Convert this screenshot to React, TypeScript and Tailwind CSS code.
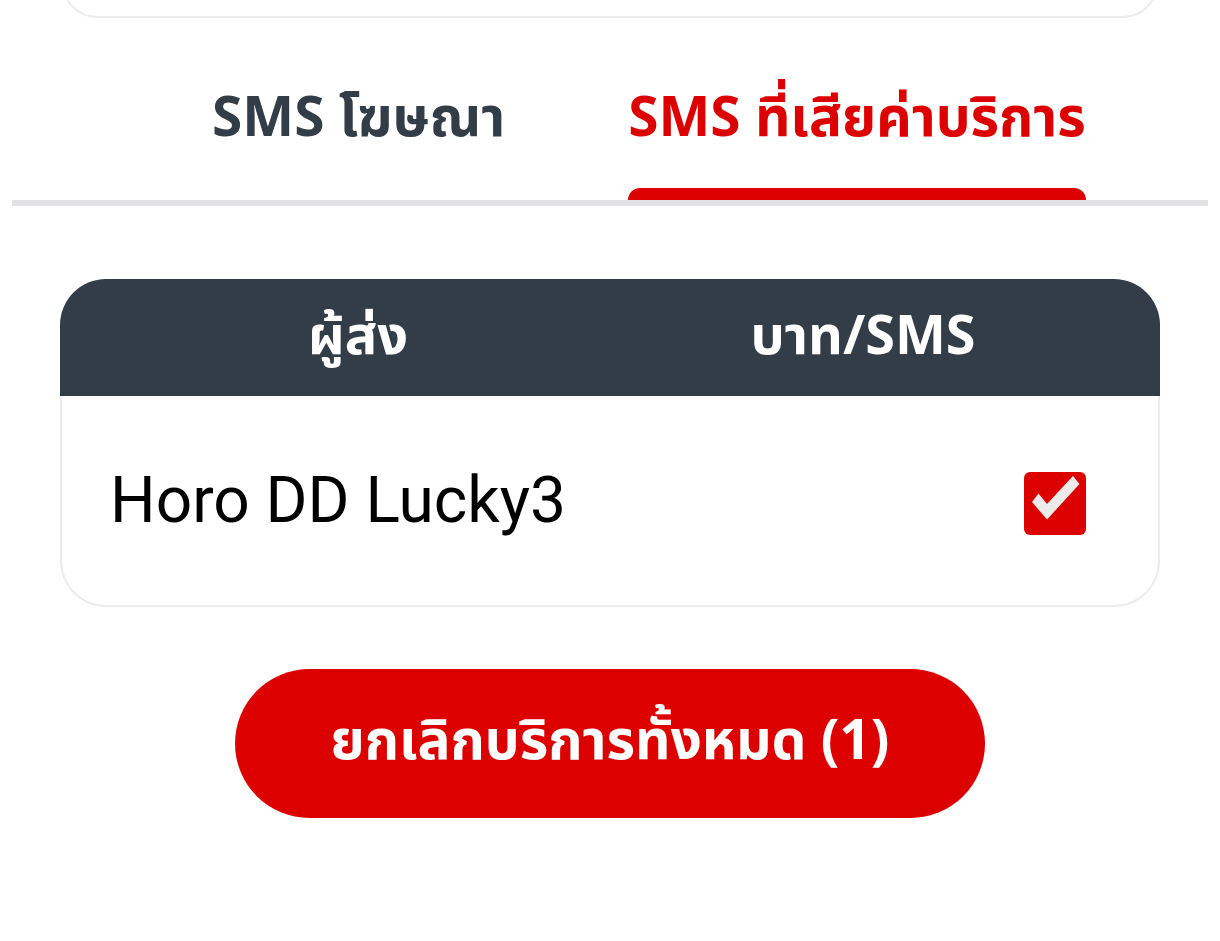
import { useState } from "react";

const thai = "font-['Noto_Sans_Thai','Noto_Sans','Roboto',sans-serif]";

function Check() {
  return (
    <div className="w-[62px] h-[63px] rounded-[6px] bg-[#dd0000]">
      <svg width="62" height="63" viewBox="0 0 62 63">
        <polygon points="8,30 14.5,21.5 23,32 49,4 55.5,12 23,47.5" fill="#ebebeb" />
      </svg>
    </div>
  );
}

export default function App() {
  const [tab, setTab] = useState(1);
  const tabs = ["SMS โฆษณา", "SMS ที่เสียค่าบริการ"];

  return (
    <div className={`w-[1220px] h-[941px] bg-white overflow-hidden ${thai}`}>
      {/* bottom of the card above */}
      <div className="mx-[62px] h-[70px] -mt-[52px] rounded-[42px] border-2 border-[#ececec] bg-white" />

      <div className="flex gap-[99px] mt-[72px] pl-[200px]">
        {tabs.map((t, i) => (
          <button key={t} onClick={() => setTab(i)} className="flex flex-col items-center px-3">
            <span
              className={`h-[60px] leading-[60px] text-[55px] font-bold whitespace-nowrap ${
                tab === i ? "text-[#dd0000]" : "text-[#333d47]"
              }`}
            >
              {t}
            </span>
            <span className={`mt-[38px] h-[12px] w-full rounded-t-[12px] ${tab === i ? "bg-[#dd0000]" : "bg-transparent"}`} />
          </button>
        ))}
      </div>
      <div className="mx-[12px] h-[6px] bg-[#e2e2e4]" />

      <div className="mx-[60px] mt-[73px]">
        <div className="h-[117px] bg-[#333d47] rounded-t-[46px] flex items-center text-white text-[54px] font-bold">
          <div className="w-[596px] text-center">ผู้ส่ง</div>
          <div className="w-[414px] text-center">บาท/SMS</div>
        </div>
        <div className="h-[211px] border-2 border-t-0 border-[#ececec] rounded-b-[46px] flex items-center justify-between pl-[48px] pr-[72px]">
          <span className="text-[64px] text-black font-['Roboto',sans-serif]">Horo DD Lucky3</span>
          <div className="mt-[6px]">
            <Check />
          </div>
        </div>
      </div>

      <div className="flex justify-center mt-[62px]">
        <button className="w-[750px] h-[149px] rounded-full bg-[#dd0000] text-white text-[55px] font-bold">
          ยกเลิกบริการทั้งหมด (1)
        </button>
      </div>
    </div>
  );
}
